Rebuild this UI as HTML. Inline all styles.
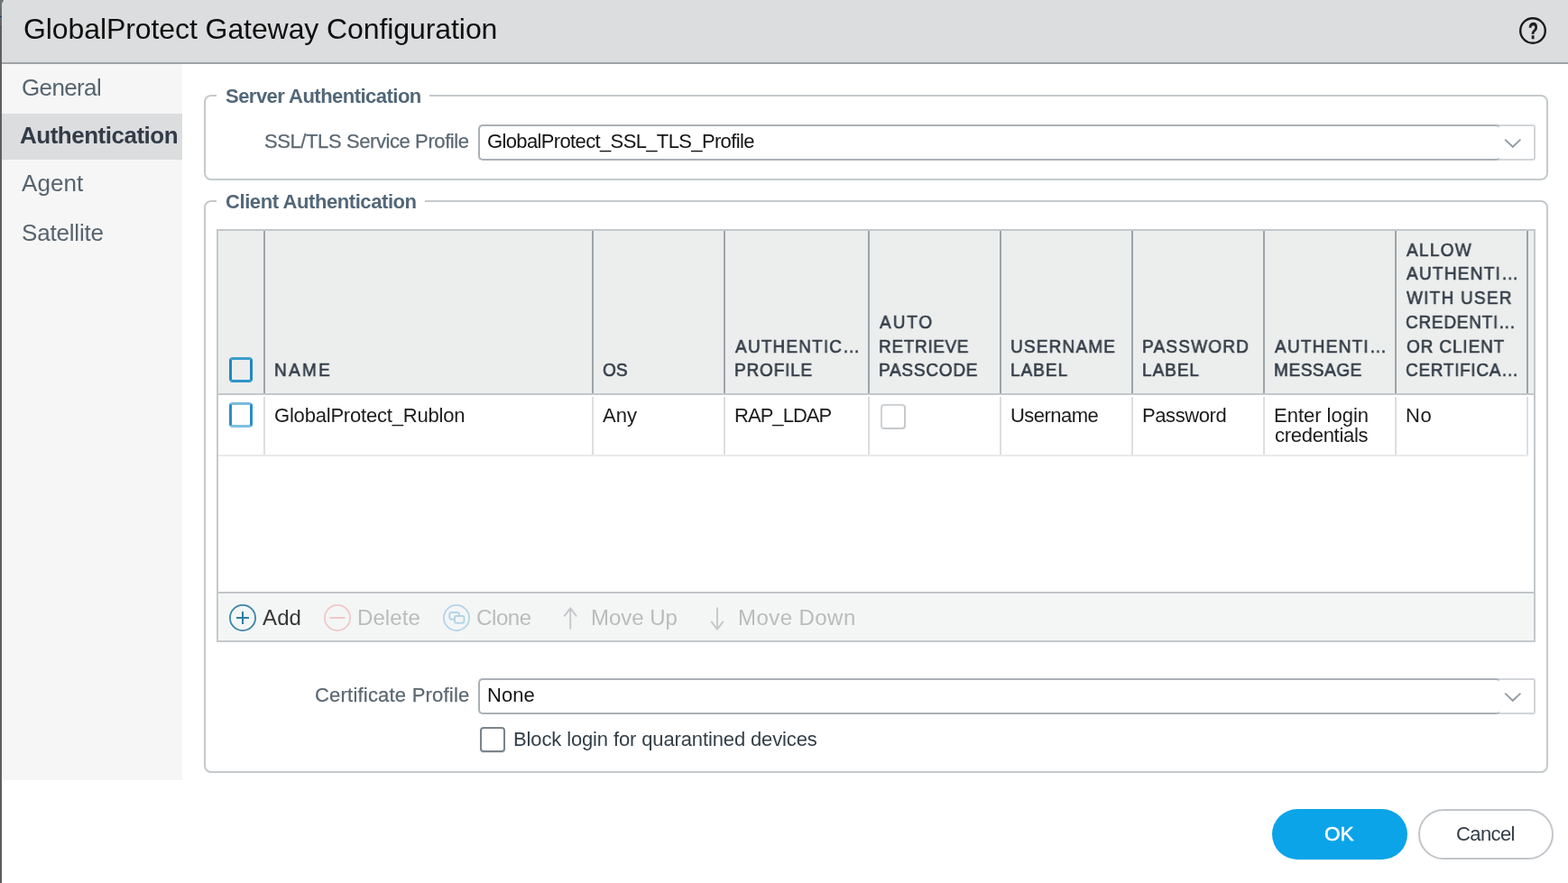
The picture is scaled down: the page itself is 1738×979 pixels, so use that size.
<!DOCTYPE html>
<html lang="en"><head><meta charset="utf-8"><title>GlobalProtect Gateway Configuration</title>
<style>
html,body{margin:0;padding:0;background:#fff;}
body{width:1738px;height:979px;position:relative;overflow:hidden;font-family:"Liberation Sans", sans-serif;}
.b{position:absolute;box-sizing:border-box;}
.t{position:absolute;white-space:nowrap;line-height:1;font-family:"Liberation Sans", sans-serif;will-change:transform;}
.h{-webkit-text-stroke:0.6px #333d47;transform-origin:0 0;}
.q{transform-origin:0 0;-webkit-text-stroke:0.5px #1a1a1a;}
.ok{-webkit-text-stroke:0.5px #fff;}
.lb{-webkit-text-stroke:0.25px #5b6872;}
svg{position:absolute;overflow:visible;}
</style></head><body>
<!-- dialog chrome -->
<div class="b" style="left:0;top:0;width:4px;height:979px;background:linear-gradient(#6f767a 0,#666b6e 18px,#5e5e5e 34px,#5e5e5e 100%);"></div>
<div class="b" style="left:0;top:18px;width:2px;height:1px;background:#123d6b;"></div>
<div class="b" style="left:0;top:30px;width:2px;height:1px;background:#2b5878;"></div>
<div class="b" style="left:2px;top:0;width:1736px;height:71px;background:#dcddde;border-bottom:2px solid #9ea3a7;border-top-left-radius:5px;"></div>
<div class="b" style="left:2px;top:71px;width:2px;height:908px;background:#fff;"></div>
<!-- sidebar -->
<div class="b" style="left:2px;top:71px;width:200px;height:794px;background:#f6f6f6;"></div>
<div class="b" style="left:2px;top:126px;width:200px;height:51px;background:#dcdddf;"></div>
<!-- help icon -->
<svg style="left:1683px;top:18px;" width="32" height="32" viewBox="0 0 32 32"><circle cx="16" cy="16" r="13.8" fill="none" stroke="#1a1a1a" stroke-width="2.4"/></svg>
<!-- fieldset 1 -->
<div class="b" style="left:226px;top:105px;width:1490px;height:95px;border:2px solid #c5c9cc;border-radius:8px;"></div>
<div class="b" style="left:240px;top:103px;width:236px;height:6px;background:#fff;"></div>
<!-- fieldset 2 -->
<div class="b" style="left:226px;top:222px;width:1490px;height:635px;border:2px solid #c5c9cc;border-radius:8px;"></div>
<div class="b" style="left:240px;top:220px;width:231px;height:6px;background:#fff;"></div>
<!-- input 1 -->
<div class="b" style="left:1660px;top:138px;width:42px;height:40px;border:2px solid #d2d5d8;border-left:0;border-radius:0 3px 3px 0;background:#fff;"></div>
<div class="b" style="left:530px;top:138px;width:1132px;height:40px;border:2px solid #abb0b5;border-right:0;border-radius:5px 4px 4px 5px;background:#fff;"></div>
<svg style="left:1667px;top:153px;" width="20" height="12" viewBox="0 0 20 12"><path d="M1.2 1.6 L9.8 9.8 L18.4 1.6" fill="none" stroke="#979ea4" stroke-width="2"/></svg>
<!-- grid -->
<div class="b" style="left:240px;top:254px;width:1462px;height:458px;border:2px solid #c4c8cb;background:#fff;"></div>
<div class="b" style="left:242px;top:256px;width:1458px;height:182px;background:#eceeee;border-bottom:2px solid #c3c7ca;"></div>
<div class="b" style="left:242px;top:504px;width:1452px;height:2px;background:#e9ebeb;"></div>
<div class="b" style="left:242px;top:656px;width:1458px;height:54px;background:#f4f6f6;border-top:2px solid #c2c6c9;"></div>
<!-- input 2 -->
<div class="b" style="left:1660px;top:752px;width:42px;height:40px;border:2px solid #d2d5d8;border-left:0;border-radius:0 3px 3px 0;background:#fff;"></div>
<div class="b" style="left:530px;top:752px;width:1132px;height:40px;border:2px solid #abb0b5;border-right:0;border-radius:5px 4px 4px 5px;background:#fff;"></div>
<svg style="left:1667px;top:767px;" width="20" height="12" viewBox="0 0 20 12"><path d="M1.2 1.6 L9.8 9.8 L18.4 1.6" fill="none" stroke="#979ea4" stroke-width="2"/></svg>
<!-- checkbox block login -->
<div class="b" style="left:532px;top:806px;width:28px;height:28px;border:2px solid #7a848b;border-radius:4px;background:#fff;box-shadow:0 1px 1px rgba(0,0,0,.12);"></div>
<!-- buttons -->
<div class="b" style="left:1410px;top:897px;width:150px;height:56px;border-radius:28px;background:#0ba4e8;"></div>
<div class="b" style="left:1572px;top:897px;width:150px;height:56px;border-radius:28px;background:#fff;border:2px solid #c2c6ca;"></div>
<div class="b" style="left:292px;top:256px;width:2px;height:180px;background:#9da3a8;"></div>
<div class="b" style="left:292px;top:440px;width:2px;height:64px;background:#dcdee0;"></div>
<div class="b" style="left:656px;top:256px;width:2px;height:180px;background:#9da3a8;"></div>
<div class="b" style="left:656px;top:440px;width:2px;height:64px;background:#dcdee0;"></div>
<div class="b" style="left:802px;top:256px;width:2px;height:180px;background:#9da3a8;"></div>
<div class="b" style="left:802px;top:440px;width:2px;height:64px;background:#dcdee0;"></div>
<div class="b" style="left:962px;top:256px;width:2px;height:180px;background:#9da3a8;"></div>
<div class="b" style="left:962px;top:440px;width:2px;height:64px;background:#dcdee0;"></div>
<div class="b" style="left:1108px;top:256px;width:2px;height:180px;background:#9da3a8;"></div>
<div class="b" style="left:1108px;top:440px;width:2px;height:64px;background:#dcdee0;"></div>
<div class="b" style="left:1254px;top:256px;width:2px;height:180px;background:#9da3a8;"></div>
<div class="b" style="left:1254px;top:440px;width:2px;height:64px;background:#dcdee0;"></div>
<div class="b" style="left:1400px;top:256px;width:2px;height:180px;background:#9da3a8;"></div>
<div class="b" style="left:1400px;top:440px;width:2px;height:64px;background:#dcdee0;"></div>
<div class="b" style="left:1546px;top:256px;width:2px;height:180px;background:#9da3a8;"></div>
<div class="b" style="left:1546px;top:440px;width:2px;height:64px;background:#dcdee0;"></div>
<div class="b" style="left:1692px;top:256px;width:2px;height:180px;background:#9da3a8;"></div>
<div class="b" style="left:1692px;top:440px;width:2px;height:64px;background:#dcdee0;"></div>
<!-- grid checkboxes -->
<div class="b" style="left:254px;top:396px;width:26px;height:28px;border:3px solid #1f88c0;border-top-color:#3c9ccb;border-bottom-color:#2f95c7;border-radius:4px;"></div>
<div class="b" style="left:254px;top:446px;width:26px;height:28px;border:3px solid #2a8ec4;border-top-color:#7bbbdc;border-bottom-color:#7cc0e0;border-radius:4px;background:#fff;"></div>
<div class="b" style="left:976px;top:448px;width:28px;height:28px;border:2px solid #cfd2d4;border-right-color:#c6c9cb;border-bottom-color:#c6c9cb;border-radius:4px;background:#fff;"></div>
<!-- toolbar icons -->
<svg style="left:253px;top:669px;" width="32" height="32" viewBox="0 0 32 32"><circle cx="16" cy="16" r="14.1" fill="none" stroke="#3a86ab" stroke-width="1.8"/><path d="M9 16 H23 M16 9 V23" stroke="#2e7fa5" stroke-width="2" fill="none"/></svg>
<svg style="left:358px;top:669px;" width="32" height="32" viewBox="0 0 32 32"><circle cx="16" cy="16" r="14.1" fill="none" stroke="#f2c6c8" stroke-width="1.8"/><path d="M7.4 16 H24.6" stroke="#f2c6c8" stroke-width="2" fill="none"/></svg>
<svg style="left:490px;top:669px;" width="32" height="32" viewBox="0 0 32 32"><circle cx="16" cy="16" r="14.1" fill="none" stroke="#b3d5e6" stroke-width="1.8"/><rect x="8.3" y="10" width="10.6" height="7.8" rx="2.2" fill="none" stroke="#b3d5e6" stroke-width="1.9"/><rect x="13.9" y="14" width="10.6" height="7.8" rx="2.2" fill="#f4f6f6" stroke="#b3d5e6" stroke-width="1.9"/></svg>
<svg style="left:620px;top:670px;" width="24" height="32" viewBox="0 0 24 32"><path d="M12.2 27.8 V4.6 M5.3 13.4 L12.2 4.4 L19.1 13.4" fill="none" stroke="#c6c8ca" stroke-width="1.9"/></svg>
<svg style="left:783px;top:670px;" width="24" height="32" viewBox="0 0 24 32"><path d="M12 3.6 V27.4 M5.2 18.8 L12 27.7 L18.8 18.8" fill="none" stroke="#c6c8ca" stroke-width="1.9"/></svg>

<span class="t" style="left:26.00px;top:16.00px;font-size:32px;letter-spacing:-0.085px;color:#0f0f0f;">GlobalProtect Gateway Configuration</span>
<span class="t q" style="left:1694.29px;top:22.00px;font-size:25px;letter-spacing:0.000px;color:#1a1a1a;font-weight:700;transform:scaleX(0.7148207918934099);">?</span>
<span class="t" style="left:23.70px;top:84.00px;font-size:26px;letter-spacing:-0.637px;color:#56646f;">General</span>
<span class="t" style="left:22.10px;top:137.00px;font-size:26px;letter-spacing:-0.494px;color:#323c47;font-weight:700;">Authentication</span>
<span class="t" style="left:24.40px;top:190.00px;font-size:26px;letter-spacing:0.068px;color:#56646f;">Agent</span>
<span class="t" style="left:23.90px;top:245.00px;font-size:26px;letter-spacing:-0.193px;color:#56646f;">Satellite</span>
<span class="t" style="left:250.30px;top:96.00px;font-size:22px;letter-spacing:-0.528px;color:#536778;font-weight:700;">Server Authentication</span>
<span class="t" style="left:250.30px;top:213.00px;font-size:22px;letter-spacing:-0.418px;color:#536778;font-weight:700;">Client Authentication</span>
<span class="t lb" style="left:292.60px;top:146.00px;font-size:22px;letter-spacing:-0.407px;color:#5b6872;">SSL/TLS Service Profile</span>
<span class="t lb" style="left:348.90px;top:760.00px;font-size:22px;letter-spacing:0.207px;color:#5b6872;">Certificate Profile</span>
<span class="t" style="left:539.70px;top:146.00px;font-size:22px;letter-spacing:-0.638px;color:#141414;">GlobalProtect_SSL_TLS_Profile</span>
<span class="t" style="left:540.10px;top:760.00px;font-size:22px;letter-spacing:0.047px;color:#141414;">None</span>
<span class="t h" style="left:303.87px;top:400.00px;font-size:20.5px;letter-spacing:2.426px;color:#333d47;transform:scaleX(0.93);">NAME</span>
<span class="t h" style="left:668.30px;top:400.00px;font-size:20.5px;letter-spacing:0.081px;color:#333d47;transform:scaleX(0.93);">OS</span>
<span class="t h" style="left:814.90px;top:374.00px;font-size:20.5px;letter-spacing:1.202px;color:#333d47;transform:scaleX(0.93);">AUTHENTIC…</span>
<span class="t h" style="left:813.97px;top:400.00px;font-size:20.5px;letter-spacing:0.820px;color:#333d47;transform:scaleX(0.93);">PROFILE</span>
<span class="t h" style="left:974.70px;top:347.00px;font-size:20.5px;letter-spacing:1.958px;color:#333d47;transform:scaleX(0.93);">AUTO</span>
<span class="t h" style="left:973.77px;top:374.00px;font-size:20.5px;letter-spacing:0.645px;color:#333d47;transform:scaleX(0.93);">RETRIEVE</span>
<span class="t h" style="left:973.77px;top:400.00px;font-size:20.5px;letter-spacing:0.756px;color:#333d47;transform:scaleX(0.93);">PASSCODE</span>
<span class="t h" style="left:1119.77px;top:374.00px;font-size:20.5px;letter-spacing:1.229px;color:#333d47;transform:scaleX(0.93);">USERNAME</span>
<span class="t h" style="left:1119.77px;top:400.00px;font-size:20.5px;letter-spacing:1.006px;color:#333d47;transform:scaleX(0.93);">LABEL</span>
<span class="t h" style="left:1265.87px;top:374.00px;font-size:20.5px;letter-spacing:1.254px;color:#333d47;transform:scaleX(0.93);">PASSWORD</span>
<span class="t h" style="left:1265.87px;top:400.00px;font-size:20.5px;letter-spacing:0.979px;color:#333d47;transform:scaleX(0.93);">LABEL</span>
<span class="t h" style="left:1412.90px;top:374.00px;font-size:20.5px;letter-spacing:1.282px;color:#333d47;transform:scaleX(0.93);">AUTHENTI…</span>
<span class="t h" style="left:1411.97px;top:400.00px;font-size:20.5px;letter-spacing:0.567px;color:#333d47;transform:scaleX(0.93);">MESSAGE</span>
<span class="t h" style="left:1558.80px;top:267.00px;font-size:20.5px;letter-spacing:1.301px;color:#333d47;transform:scaleX(0.93);">ALLOW</span>
<span class="t h" style="left:1558.80px;top:293.00px;font-size:20.5px;letter-spacing:1.322px;color:#333d47;transform:scaleX(0.93);">AUTHENTI…</span>
<span class="t h" style="left:1558.80px;top:320.00px;font-size:20.5px;letter-spacing:1.273px;color:#333d47;transform:scaleX(0.93);">WITH USER</span>
<span class="t h" style="left:1557.87px;top:347.00px;font-size:20.5px;letter-spacing:0.730px;color:#333d47;transform:scaleX(0.93);">CREDENTI…</span>
<span class="t h" style="left:1558.80px;top:374.00px;font-size:20.5px;letter-spacing:0.881px;color:#333d47;transform:scaleX(0.93);">OR CLIENT</span>
<span class="t h" style="left:1557.87px;top:400.00px;font-size:20.5px;letter-spacing:0.694px;color:#333d47;transform:scaleX(0.93);">CERTIFICA…</span>
<span class="t" style="left:303.50px;top:450.00px;font-size:22px;letter-spacing:-0.201px;color:#1c1c1c;">GlobalProtect_Rublon</span>
<span class="t" style="left:668.00px;top:450.00px;font-size:22px;letter-spacing:-0.011px;color:#1c1c1c;">Any</span>
<span class="t" style="left:813.60px;top:450.00px;font-size:22px;letter-spacing:-0.954px;color:#1c1c1c;">RAP_LDAP</span>
<span class="t" style="left:1120.40px;top:450.00px;font-size:22px;letter-spacing:-0.521px;color:#1c1c1c;">Username</span>
<span class="t" style="left:1265.50px;top:450.00px;font-size:22px;letter-spacing:-0.408px;color:#1c1c1c;">Password</span>
<span class="t" style="left:1411.60px;top:450.00px;font-size:22px;letter-spacing:-0.015px;color:#1c1c1c;">Enter login</span>
<span class="t" style="left:1412.60px;top:472.00px;font-size:22px;letter-spacing:-0.279px;color:#1c1c1c;">credentials</span>
<span class="t" style="left:1557.50px;top:450.00px;font-size:22px;letter-spacing:0.610px;color:#1c1c1c;">No</span>
<span class="t" style="left:290.80px;top:673.00px;font-size:24px;letter-spacing:0.122px;color:#363636;">Add</span>
<span class="t" style="left:395.70px;top:673.00px;font-size:24px;letter-spacing:0.095px;color:#bbbbbb;">Delete</span>
<span class="t" style="left:527.60px;top:673.00px;font-size:24px;letter-spacing:-0.393px;color:#bbbbbb;">Clone</span>
<span class="t" style="left:654.90px;top:673.00px;font-size:24px;letter-spacing:-0.017px;color:#bbbbbb;">Move Up</span>
<span class="t" style="left:817.80px;top:673.00px;font-size:24px;letter-spacing:0.441px;color:#bbbbbb;">Move Down</span>
<span class="t" style="left:568.60px;top:809.00px;font-size:22px;letter-spacing:-0.130px;color:#333f48;">Block login for quarantined devices</span>
<span class="t ok" style="left:1468.30px;top:914.00px;font-size:22.5px;letter-spacing:-0.008px;color:#ffffff;">OK</span>
<span class="t" style="left:1614.20px;top:914.00px;font-size:22px;letter-spacing:-0.619px;color:#333d47;">Cancel</span>
</body></html>
